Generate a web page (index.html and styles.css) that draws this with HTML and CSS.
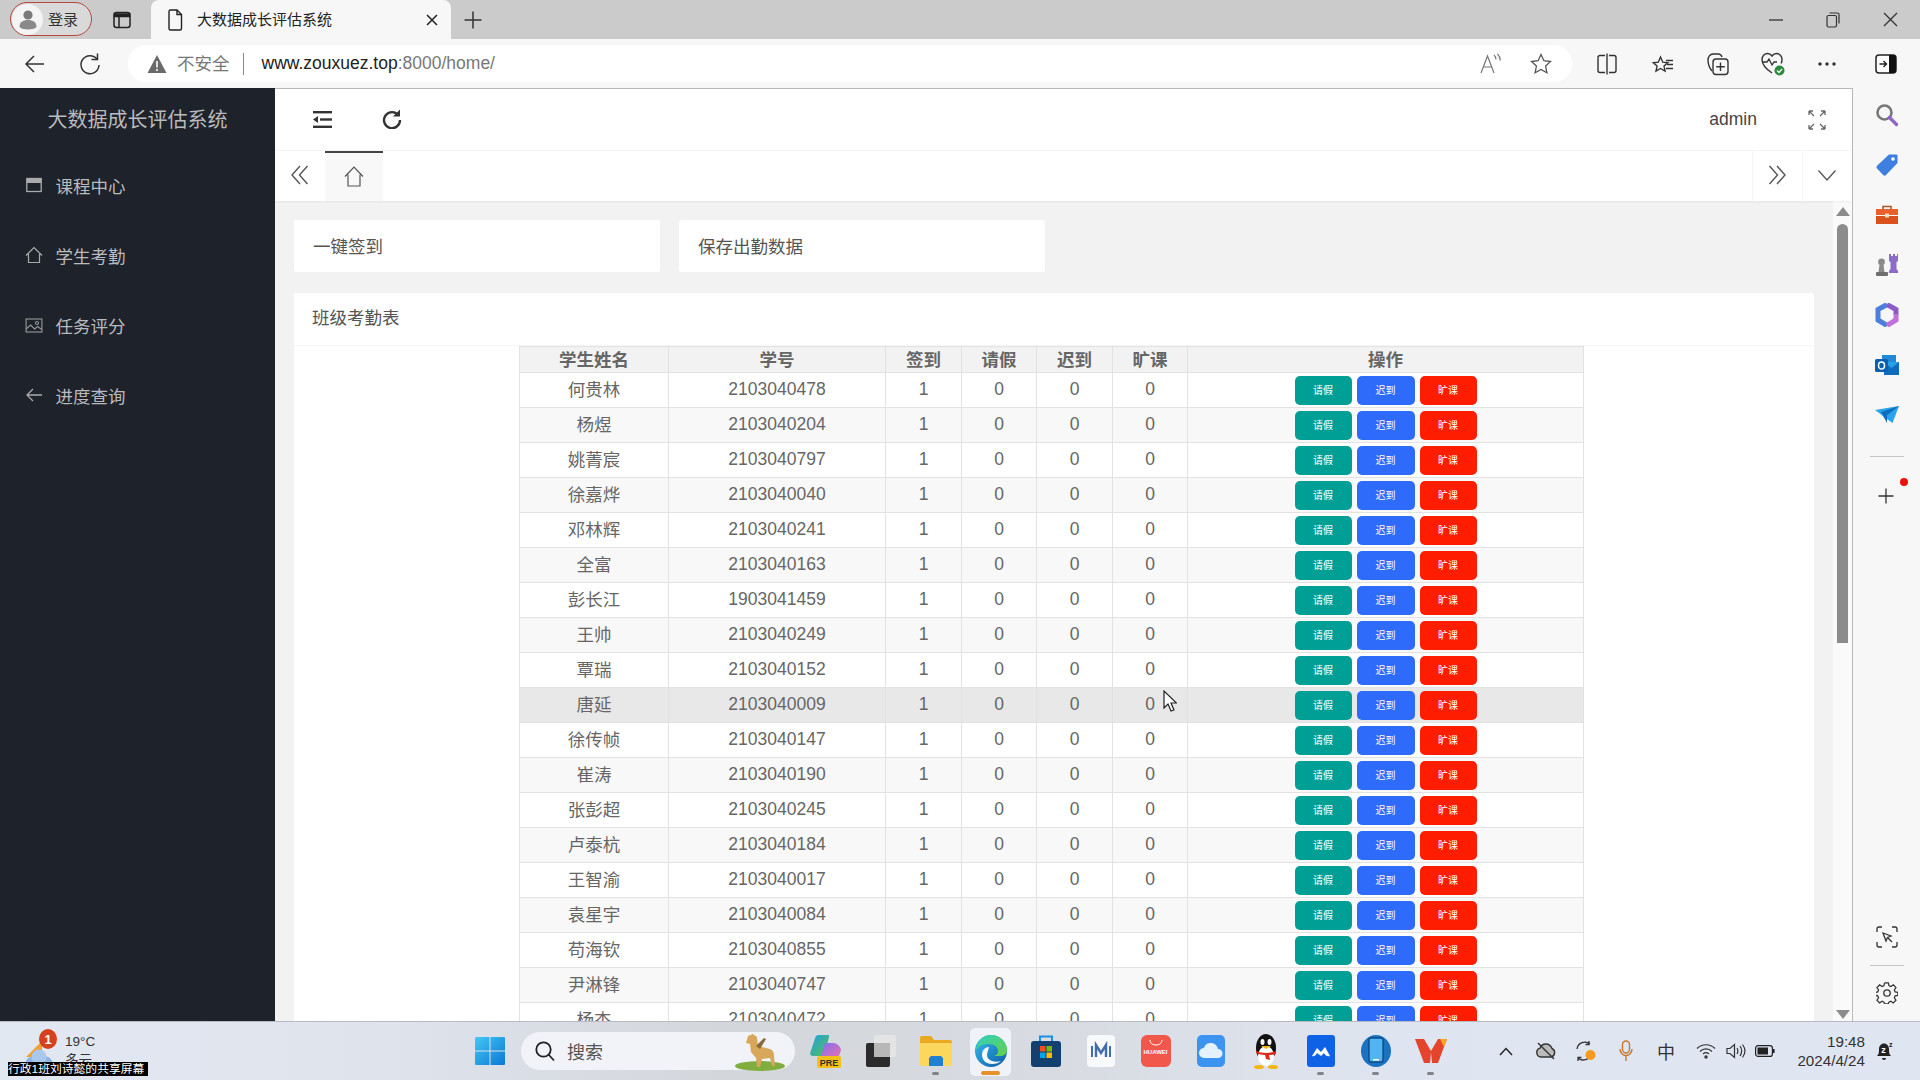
FILE: index.html
```html
<!DOCTYPE html>
<html lang="zh-CN">
<head>
<meta charset="utf-8">
<title>大数据成长评估系统</title>
<link rel="stylesheet" href="styles.css">
</head>
<body>
<div class="window">

  <div class="tabstrip">
    <div class="profile">
      <span class="avatar"><svg width="24" height="24" viewBox="0 0 24 24"><circle cx="12" cy="8" r="4.6" fill="#7a7a7a"/><path d="M3.5 20c0-5 3.5-7 8.5-7s8.500 2 8.500 7c-2 1.800-5 2.500-8.500 2.500S5.500 21.800 3.500 20z" fill="#8a8a8a"/></svg></span>
      <span class="profile-name">登录</span>
    </div>
    <div class="strip-btn"><svg width="20" height="20" viewBox="0 0 20 20" fill="none" stroke="#222" stroke-width="1.500"><rect x="2" y="2.500" width="16" height="15" rx="2.500"/><path d="M2.500 4h15v2.500h-15z" fill="#222"/><path d="M7 6v11"/></svg></div>
    <div class="tab">
      <svg width="16" height="22" viewBox="0 0 16 22" fill="none" stroke="#222" stroke-width="1.400"><path d="M2 2.500a1.500 1.500 0 0 1 1.500-1.500H10l4.500 4.500v14a1.500 1.500 0 0 1-1.500 1.500H3.500A1.500 1.500 0 0 1 2 19.500z"/><path d="M10 1v4.500h4.500"/></svg>
      <span class="tab-title">大数据成长评估系统</span>
      <svg class="tab-close" width="14" height="14" viewBox="0 0 14 14" stroke="#222" stroke-width="1.500"><path d="M2 2l10 10M12 2L2 12"/></svg>
    </div>
    <div class="strip-btn new-tab"><svg width="20" height="20" viewBox="0 0 20 20" stroke="#333" stroke-width="1.500"><path d="M10 1.500v17M1.500 10h17"/></svg></div>
    <div class="win-controls">
      <div class="win-btn"><svg width="14" height="14" viewBox="0 0 14 14" stroke="#333" stroke-width="1.300"><path d="M0 7h14"/></svg></div>
      <div class="win-btn"><svg width="14" height="16" viewBox="0 0 14 16" fill="none" stroke="#333" stroke-width="1.200"><rect x="1" y="3.500" width="9.500" height="11.500" rx="1.500"/><path d="M3.500 1h8a1.500 1.500 0 0 1 1.500 1.500v9"/></svg></div>
      <div class="win-btn"><svg width="15" height="15" viewBox="0 0 15 15" stroke="#333" stroke-width="1.300"><path d="M1 1l13 13M14 1L1 14"/></svg></div>
    </div>
  </div>

  <div class="toolbar">
    <div class="tool-btn"><svg width="22" height="20" viewBox="0 0 22 20" fill="none" stroke="#333" stroke-width="1.500"><path d="M20 10H2M10 2l-8 8 8 8"/></svg></div>
    <div class="tool-btn"><svg width="22" height="24" viewBox="0 0 22 24" fill="none" stroke="#333" stroke-width="1.500"><path d="M18 7a9 9 0 1 0 2 6"/><path d="M18.500 1.500V7.500H12.500"/></svg></div>
    <div class="address">
      <svg class="warn" width="20" height="20" viewBox="0 0 20 20"><path d="M10 1L19.500 19H.5z" fill="#6a6a6a"/><path d="M10 7v6.500M10 15v2" stroke="#fff" stroke-width="1.600"/></svg>
      <span class="insecure">不安全</span>
      <span class="addr-sep"></span>
      <span class="url"><b>www.zouxuez.top</b>:8000/home/</span>
      <div class="addr-btn addr-read"><svg width="24" height="22" viewBox="0 0 24 22" fill="none" stroke="#777" stroke-width="1.200"><path d="M2 20L8.500 3 15 20M4.500 14h8"/><path d="M15 2c1.500 1.500 2 3 2 4.500M18.500 1c2 2 2.800 4 2.800 6.500"/></svg></div>
      <div class="addr-btn"><svg width="22" height="22" viewBox="0 0 22 22" fill="none" stroke="#555" stroke-width="1.300"><path d="M11 1.500l2.900 6.200 6.600.8-4.900 4.600 1.300 6.700L11 16.500l-5.900 3.300 1.300-6.700L1.500 8.500l6.600-.8z"/></svg></div>
    </div>
    <div class="tool-icon split"><svg width="22" height="22" viewBox="0 0 22 22" fill="none" stroke="#333" stroke-width="1.400"><path d="M9 2.500H4a2 2 0 0 0-2 2v13a2 2 0 0 0 2 2h5M13 2.500h5a2 2 0 0 1 2 2v13a2 2 0 0 1-2 2h-5M11 .5v21"/></svg></div>
    <div class="tool-icon nudge-r"><svg width="24" height="24" viewBox="0 0 24 24" fill="none" stroke="#333" stroke-width="1.400"><path d="M9.500 2l2.300 5.200 5 .5-3.800 3.400 1.100 5L9.500 13.500 5 16.100l1.100-5L2.300 7.700l5-.5z" transform="translate(0 3)"/><path d="M15 8.500h7M16 12.500h6M15 16.500h7"/></svg></div>
    <div class="tool-icon"><svg width="24" height="24" viewBox="0 0 24 24" fill="none" stroke="#333" stroke-width="1.400"><path d="M6 19C3.500 16 2 12 2 8c0-3 2-6 5-6h5c2 0 3.500 1 4 3"/><rect x="7" y="7" width="15" height="15.500" rx="3"/><path d="M14.500 10.500v8.500M10.200 14.700h8.600"/></svg></div>
    <div class="tool-icon"><svg width="26" height="26" viewBox="0 0 26 26" fill="none"><path d="M12 22C6 18 2 14 2 8.500 2 5 4.500 2.500 7.500 2.500c2 0 3.500 1 4.500 2.500 1-1.500 2.500-2.500 4.500-2.500 3 0 5.500 2.500 5.500 6 0 1.500-.3 2.700-.8 4" stroke="#333" stroke-width="1.400"/><path d="M3 11h4l2 -3 3 6 2-3h3" stroke="#333" stroke-width="1.300"/><circle cx="19.500" cy="19.500" r="5" fill="#2c8a3c"/><path d="M17 19.500l2 2 3-3.500" stroke="#fff" stroke-width="1.200"/></svg></div>
    <div class="tool-icon nudge-l"><svg width="20" height="6" viewBox="0 0 20 6" fill="#333"><circle cx="3" cy="3" r="1.700"/><circle cx="10" cy="3" r="1.700"/><circle cx="17" cy="3" r="1.700"/></svg></div>
    <div class="tool-toggle"><svg width="22" height="20" viewBox="0 0 22 20"><rect x="1" y="1" width="20" height="18" rx="3" fill="#fff" stroke="#222" stroke-width="1.500"/><path d="M14 1h4a3 3 0 0 1 3 3v12a3 3 0 0 1-3 3h-4z" fill="#111"/><path d="M4.500 10h7M8.500 7l3 3-3 3" fill="none" stroke="#222" stroke-width="1.400"/></svg></div>
  </div>

  <div class="workspace">
    <aside class="sidebar">
      <div class="brand">大数据成长评估系统</div>
      <nav>
        <div class="nav-item"><svg width="16" height="16" viewBox="0 0 16 16" fill="none" stroke="#aaa"><rect x=".8" y="1.500" width="14.400" height="13" stroke-width="1.300"/><path d="M1 2h14v3.500H1z" fill="#aaa"/></svg><span>课程中心</span></div>
        <div class="nav-item"><svg width="18" height="18" viewBox="0 0 18 18" fill="none" stroke="#aaa" stroke-width="1.200"><path d="M1 9.500L9 1.500l8 8M3.500 8v8.500h11V8"/></svg><span>学生考勤</span></div>
        <div class="nav-item"><svg width="17" height="15" viewBox="0 0 17 15" fill="none" stroke="#999" stroke-width="1.100"><rect x=".6" y="1" width="15.800" height="13"/><path d="M.6 11l4.500-4 4 4 3-2.500 4.300 3"/><circle cx="11.500" cy="5" r="1.500"/></svg><span>任务评分</span></div>
        <div class="nav-item"><svg width="17" height="14" viewBox="0 0 17 14" fill="none" stroke="#aaa" stroke-width="1.300"><path d="M16.500 7H1.500M7.500 1L1.500 7l6 6"/></svg><span>进度查询</span></div>
      </nav>
    </aside>

    <main class="main">
      <header class="topbar">
        <div class="top-btn"><svg width="19" height="17" viewBox="0 0 19 17" fill="#333"><rect width="19" height="2.400"/><rect y="14.600" width="19" height="2.400"/><rect x="7" y="7.300" width="12" height="2.400"/><path d="M0 8.500L5 5v7z"/></svg></div>
        <div class="top-btn raise"><svg width="20" height="20" viewBox="0 0 20 20" fill="none" stroke="#333" stroke-width="2.400"><path d="M16.500 6.500A8 8 0 1 0 18 11"/><path d="M18 .5v7h-7z" stroke="none" fill="#333"/></svg></div>
        <div class="admin">admin</div>
        <div class="top-btn full"><svg width="18" height="20" viewBox="0 0 18 20" fill="none" stroke="#666" stroke-width="1.300"><path d="M1 1l5 5M1 1v4M1 1h4M17 1l-5 5M17 1v4M17 1h-4M1 19l5-5M1 19v-4M1 19h4M17 19l-5-5M17 19v-4M17 19h-4"/></svg></div>
      </header>
      <div class="tabsbar">
        <div class="tabs-btn"><svg width="18" height="20" viewBox="0 0 18 20" fill="none" stroke="#555" stroke-width="1.400"><path d="M9 1L1 10l8 9M16.500 1l-8 9 8 9"/></svg></div>
        <div class="home-tab"><svg width="20" height="21" viewBox="0 0 20 21" fill="none" stroke="#555" stroke-width="1.200"><path d="M1 10.500L10 1l9 9.500M4 8.500V20h12V8.500"/></svg></div>
        <div class="tabs-fill"></div>
        <div class="tabs-btn side"><svg width="18" height="20" viewBox="0 0 18 20" fill="none" stroke="#555" stroke-width="1.400"><path d="M1.500 1l8 9-8 9M9 1l8 9-8 9"/></svg></div>
        <div class="tabs-btn side"><svg width="18" height="11" viewBox="0 0 18 11" fill="none" stroke="#555" stroke-width="1.300"><path d="M.5 .5L9 10l8.500-9.500"/></svg></div>
      </div>

      <div class="content">
        <div class="scroller">
          <div class="action-row">
            <div class="card action-card">一键签到</div>
            <div class="card action-card">保存出勤数据</div>
          </div>
          <section class="card table-card">
            <div class="card-title">班级考勤表</div>
            <table class="grid">
              <colgroup><col class="c-name"><col class="c-id"><col class="c-w"><col class="c-n"><col class="c-w"><col class="c-n"><col class="c-ops"></colgroup>
              <thead><tr><th>学生姓名</th><th>学号</th><th>签到</th><th>请假</th><th>迟到</th><th>旷课</th><th>操作</th></tr></thead>
              <tbody>
                <tr><td>何贵林</td><td>2103040478</td><td>1</td><td>0</td><td>0</td><td>0</td><td><div class="ops"><span class="op leave">请假</span><span class="op late">迟到</span><span class="op absent">旷课</span></div></td></tr>
                <tr><td>杨煜</td><td>2103040204</td><td>1</td><td>0</td><td>0</td><td>0</td><td><div class="ops"><span class="op leave">请假</span><span class="op late">迟到</span><span class="op absent">旷课</span></div></td></tr>
                <tr><td>姚菁宸</td><td>2103040797</td><td>1</td><td>0</td><td>0</td><td>0</td><td><div class="ops"><span class="op leave">请假</span><span class="op late">迟到</span><span class="op absent">旷课</span></div></td></tr>
                <tr><td>徐嘉烨</td><td>2103040040</td><td>1</td><td>0</td><td>0</td><td>0</td><td><div class="ops"><span class="op leave">请假</span><span class="op late">迟到</span><span class="op absent">旷课</span></div></td></tr>
                <tr><td>邓林辉</td><td>2103040241</td><td>1</td><td>0</td><td>0</td><td>0</td><td><div class="ops"><span class="op leave">请假</span><span class="op late">迟到</span><span class="op absent">旷课</span></div></td></tr>
                <tr><td>全富</td><td>2103040163</td><td>1</td><td>0</td><td>0</td><td>0</td><td><div class="ops"><span class="op leave">请假</span><span class="op late">迟到</span><span class="op absent">旷课</span></div></td></tr>
                <tr><td>彭长江</td><td>1903041459</td><td>1</td><td>0</td><td>0</td><td>0</td><td><div class="ops"><span class="op leave">请假</span><span class="op late">迟到</span><span class="op absent">旷课</span></div></td></tr>
                <tr><td>王帅</td><td>2103040249</td><td>1</td><td>0</td><td>0</td><td>0</td><td><div class="ops"><span class="op leave">请假</span><span class="op late">迟到</span><span class="op absent">旷课</span></div></td></tr>
                <tr><td>覃瑞</td><td>2103040152</td><td>1</td><td>0</td><td>0</td><td>0</td><td><div class="ops"><span class="op leave">请假</span><span class="op late">迟到</span><span class="op absent">旷课</span></div></td></tr>
                <tr class="hovered"><td>唐延</td><td>2103040009</td><td>1</td><td>0</td><td>0</td><td>0</td><td><div class="ops"><span class="op leave">请假</span><span class="op late">迟到</span><span class="op absent">旷课</span></div></td></tr>
                <tr><td>徐传帧</td><td>2103040147</td><td>1</td><td>0</td><td>0</td><td>0</td><td><div class="ops"><span class="op leave">请假</span><span class="op late">迟到</span><span class="op absent">旷课</span></div></td></tr>
                <tr><td>崔涛</td><td>2103040190</td><td>1</td><td>0</td><td>0</td><td>0</td><td><div class="ops"><span class="op leave">请假</span><span class="op late">迟到</span><span class="op absent">旷课</span></div></td></tr>
                <tr><td>张彭超</td><td>2103040245</td><td>1</td><td>0</td><td>0</td><td>0</td><td><div class="ops"><span class="op leave">请假</span><span class="op late">迟到</span><span class="op absent">旷课</span></div></td></tr>
                <tr><td>卢泰杭</td><td>2103040184</td><td>1</td><td>0</td><td>0</td><td>0</td><td><div class="ops"><span class="op leave">请假</span><span class="op late">迟到</span><span class="op absent">旷课</span></div></td></tr>
                <tr><td>王智渝</td><td>2103040017</td><td>1</td><td>0</td><td>0</td><td>0</td><td><div class="ops"><span class="op leave">请假</span><span class="op late">迟到</span><span class="op absent">旷课</span></div></td></tr>
                <tr><td>袁星宇</td><td>2103040084</td><td>1</td><td>0</td><td>0</td><td>0</td><td><div class="ops"><span class="op leave">请假</span><span class="op late">迟到</span><span class="op absent">旷课</span></div></td></tr>
                <tr><td>苟海钦</td><td>2103040855</td><td>1</td><td>0</td><td>0</td><td>0</td><td><div class="ops"><span class="op leave">请假</span><span class="op late">迟到</span><span class="op absent">旷课</span></div></td></tr>
                <tr><td>尹淋锋</td><td>2103040747</td><td>1</td><td>0</td><td>0</td><td>0</td><td><div class="ops"><span class="op leave">请假</span><span class="op late">迟到</span><span class="op absent">旷课</span></div></td></tr>
                <tr><td>杨杰</td><td>2103040472</td><td>1</td><td>0</td><td>0</td><td>0</td><td><div class="ops"><span class="op leave">请假</span><span class="op late">迟到</span><span class="op absent">旷课</span></div></td></tr>
              </tbody>
            </table>
          </section>
        </div>
        <div class="scrollbar">
          <svg width="14" height="9" viewBox="0 0 14 9" fill="#8c8c8c"><path d="M7 0l7 9H0z"/></svg>
          <div class="thumb"></div>
          <div class="track"></div>
          <svg width="14" height="9" viewBox="0 0 14 9" fill="#8c8c8c"><path d="M7 9L0 0h14z"/></svg>
        </div>
      </div>
    </main>

    <aside class="edgebar">
      <div class="edge-item"><svg width="24" height="24" viewBox="0 0 24 24" fill="none"><circle cx="9.500" cy="9.500" r="7" stroke="#777" stroke-width="2.600"/><path d="M14.500 14.500l7 7" stroke="#8f63c8" stroke-width="3.200" stroke-linecap="round"/></svg></div>
      <div class="edge-item"><svg width="24" height="24" viewBox="0 0 24 24"><path d="M14 1.500h7.500a1 1 0 0 1 1 1V10L11 22a2 2 0 0 1-2.800 0L2 15.500a2 2 0 0 1 0-2.800z" fill="#3f7fe0"/><circle cx="18" cy="6" r="1.800" fill="#fff"/></svg></div>
      <div class="edge-item"><svg width="24" height="22" viewBox="0 0 24 22"><path d="M8 5V2.500h8V5" fill="none" stroke="#a8592a" stroke-width="1.600"/><path d="M1 5h22v6H1z" fill="#e8602a"/><path d="M1 12h22v8H1z" fill="#d9521c"/><rect x="10" y="9.500" width="4" height="4" fill="#fbd9c4"/></svg></div>
      <div class="edge-item"><svg width="24" height="24" viewBox="0 0 24 24"><path d="M14 1h2v2h2V1h2v2h2V1h1v7l-1.500 1v7l1.500 2v2H14v-2l1.500-2V9L14 8z" fill="#8b6cc9"/><circle cx="6.500" cy="9" r="3.400" fill="#8a8a8a"/><path d="M4.500 12h4l1 7h-6z" fill="#8a8a8a"/><rect x="1" y="19" width="12" height="4" rx="1" fill="#6e6e6e"/></svg></div>
      <div class="edge-item"><svg width="24" height="24" viewBox="0 0 24 24" fill="none"><path d="M12 1.500L3 6.500V17l9 5.500" stroke="#4a7fdc" stroke-width="5"/><path d="M12 1.500L21 6.500V12" stroke="#8b5cc8" stroke-width="5"/><path d="M12 22.500L21 17V11" stroke="#c070d8" stroke-width="5"/></svg></div>
      <div class="edge-item"><svg width="24" height="22" viewBox="0 0 24 22"><path d="M7 1h14v10H7z" fill="#1f8ad8"/><path d="M9 8h15v13H9z" fill="#0f6cbd"/><path d="M9 8l7.500 6L24 8" fill="#2aa0e8"/><rect x="0" y="5" width="13" height="13" rx="1.500" fill="#0a5fb0"/><ellipse cx="6.500" cy="11.500" rx="3" ry="3.600" fill="none" stroke="#fff" stroke-width="1.500"/></svg></div>
      <div class="edge-item"><svg width="24" height="18" viewBox="0 0 24 18"><path d="M0 4L24 0 17.500 17z" fill="#29a3ea"/><path d="M6 6l18-6-12 9v8z" fill="#0d6cc0"/></svg></div>
      <div class="edge-sep first"></div>
      <div class="edge-item plus"><svg width="16" height="16" viewBox="0 0 16 16" stroke="#333" stroke-width="1.300"><path d="M8 .5v15M.5 8h15"/></svg><span class="edge-dot"></span></div>
      <div class="edge-fill"></div>
      <div class="edge-item"><svg width="22" height="22" viewBox="0 0 22 22" fill="none" stroke="#333" stroke-width="1.300"><path d="M1 6V3a2 2 0 0 1 2-2h3M16 1h3a2 2 0 0 1 2 2v3M1 16v3a2 2 0 0 0 2 2h3M16 21h3a2 2 0 0 0 2-2v-3"/><path d="M7 7l8 3-3.500 1.500L10 15z"/><path d="M12 12l4 4"/></svg></div>
      <div class="edge-sep last"></div>
      <div class="edge-item"><svg width="22" height="22" viewBox="0 0 22 22" fill="none" stroke="#333" stroke-width="1.300"><path d="M9 1h4l.6 2.800 2 .9L18.200 3l2.800 2.800-1.700 2.600.9 2 2.800.6v3l-2.800.6-.9 2 1.700 2.600-2.800 2.800-2.600-1.700-2 .9L13 23H9" transform="scale(.95)"/><path d="M9 1l-.6 2.800-2 .9L3.800 3 1 5.800l1.700 2.600-.9 2L-1 11v3l2.800.6.9 2L1 19.200 3.800 22l2.600-1.700 2 .9L9 23" transform="scale(.95)"/><circle cx="11" cy="11" r="3.200"/></svg></div>
    </aside>
  </div>

  <footer class="taskbar">
    <div class="weather">
      <svg class="weather-icon" width="32" height="32" viewBox="0 0 32 32"><path d="M2 20L18 4v16z" fill="#f2a22e"/><ellipse cx="15" cy="25" rx="13" ry="7" fill="#8fb4e6"/><circle cx="15" cy="20" r="7.500" fill="#a9c8f0"/></svg>
      <span class="weather-badge">1</span>
      <div class="weather-text"><div>19°C</div><div>多云</div></div>
    </div>
    <div class="start"><svg width="30" height="30" viewBox="0 0 30 30"><defs><linearGradient id="winA" x1="0" y1="0" x2="1" y2="1"><stop offset="0" stop-color="#43c8f5"/><stop offset="1" stop-color="#0a78d4"/></linearGradient></defs><path d="M1 1h13.500v13.500H0V2a1 1 0 0 1 1-1zM15.500 1H29a1 1 0 0 1 1 1v12.500H15.500zM0 15.500h14.500V29H1a1 1 0 0 1-1-1zM15.500 15.500H30V28a1 1 0 0 1-1 1H15.500z" fill="url(#winA)"/></svg></div>
    <div class="search">
      <svg width="22" height="22" viewBox="0 0 22 22" fill="none" stroke="#222" stroke-width="1.800"><circle cx="9.500" cy="9.500" r="7.200"/><path d="M14.500 14.500l5.500 6"/></svg>
      <span>搜索</span>
      <svg class="dog" width="52" height="38" viewBox="0 0 52 38"><ellipse cx="26" cy="33" rx="25" ry="5" fill="#7fae3f"/><path d="M14 3l5-2 4 3 1 9 12 3c3 1 4 4 4 7l1 10h-3l-2-8-8 1-2 8h-3l-1-9-5-6-1-8-4-1z" fill="#d8a75a"/><path d="M22 13l8-8 2 1-6 10z" fill="#8a6a3a"/></svg>
    </div>
    <div class="app"><svg width="32" height="34" viewBox="0 0 32 34"><defs><linearGradient id="cpA" x1="0" x2="1" y1="0" y2="1"><stop offset="0" stop-color="#1fa0e8"/><stop offset="1" stop-color="#58c050"/></linearGradient><linearGradient id="cpB" x1="0" x2="1" y1="0" y2="1"><stop offset="0" stop-color="#7a6ff0"/><stop offset="1" stop-color="#f070b0"/></linearGradient></defs><path d="M8 1h10c1 0 1.500.8 1 2L14 22H3c-2.500 0-3.500-2-2.500-4L5.500 3C6 2 7 1 8 1z" fill="url(#cpA)"/><path d="M15 9h8c4 0 7 3 8 7l-2 6c-1 2-3 3-5 3H10z" fill="url(#cpB)"/><rect x="7" y="22" width="24" height="12" rx="2" fill="#f2c21a"/><text x="19" y="31.500" class="pre">PRE</text></svg></div>
    <div class="app"><svg width="30" height="32" viewBox="0 0 30 32"><rect x="8" y="0" width="22" height="22" rx="2" fill="#e4e4e4"/><rect x="0" y="8" width="24" height="24" rx="2" fill="#2b2b2b"/><path d="M8 8h16v14H8z" fill="#b8b8b8"/></svg></div>
    <div class="app"><svg width="32" height="30" viewBox="0 0 32 30"><path d="M0 2a2 2 0 0 1 2-2h9l3 4h16a2 2 0 0 1 2 2v4H0z" fill="#e8a920"/><path d="M0 7h32v21a2 2 0 0 1-2 2H2a2 2 0 0 1-2-2z" fill="#fbd75b"/><path d="M11 20h10l2 2v8H9v-8z" fill="#1f7fd0"/></svg><span class="app-dot"></span></div>
    <div class="app active"><svg width="32" height="32" viewBox="0 0 32 32"><defs><linearGradient id="edA" x1="0" x2="1" y1="0" y2="1"><stop offset="0" stop-color="#35c1f1"/><stop offset="1" stop-color="#0c59a4"/></linearGradient><linearGradient id="edB" x1="0" x2="1" y1="0" y2="1"><stop offset="0" stop-color="#2fd0c0"/><stop offset="1" stop-color="#66d048"/></linearGradient></defs><circle cx="16" cy="16" r="16" fill="url(#edA)"/><path d="M16 0c9 0 16 7 16 15 0 4-3 6-7 6h-6c3-1 4-3 4-5 0-4-4-7-9-7C8 9 4 11 1 15 2 6 8 0 16 0z" fill="url(#edB)"/><path d="M14 12c-4 0-7 3-7 8 0 5 4 9 10 9 4 0 7-1 9-3-3 1-6 1-9 0-3-1-5-3-5-6 0-2 1-4 2-8z" fill="#fff" opacity=".95"/></svg><span class="app-line"></span></div>
    <div class="app"><svg width="30" height="32" viewBox="0 0 30 32"><path d="M9 7V1.500h12V7" fill="none" stroke="#1e8fe8" stroke-width="2"/><rect y="6" width="30" height="26" rx="3" fill="#14406f"/><rect x="9" y="11" width="5.500" height="5.500" fill="#f25022"/><rect x="15.500" y="11" width="5.500" height="5.500" fill="#7fba00"/><rect x="9" y="17.500" width="5.500" height="5.500" fill="#00a4ef"/><rect x="15.500" y="17.500" width="5.500" height="5.500" fill="#ffb900"/></svg></div>
    <div class="app"><svg width="28" height="32" viewBox="0 0 28 32"><rect width="28" height="32" rx="4" fill="#f8f9fb"/><path d="M5 11v11M23 11v11" stroke="#3f6db0" stroke-width="2"/><path d="M9 22V10l5 8 5-8v12" fill="none" stroke="#3f6db0" stroke-width="2.400"/></svg></div>
    <div class="app"><div class="huawei"><svg width="14" height="6" viewBox="0 0 14 6" fill="none" stroke="#fff"><path d="M1 0c0 3.500 3 5 6 5s6-1.500 6-5"/></svg><span>HUAWEI</span></div></div>
    <div class="app"><svg width="28" height="32" viewBox="0 0 28 32"><rect width="28" height="32" rx="5" fill="#3d94f0"/><path d="M7 23a5 5 0 0 1 0-10c1-4 4-5 7-5 3 0 6 2 7 6a4.500 4.500 0 0 1 0 9z" fill="#e4f1ff"/></svg></div>
    <div class="app"><svg width="26" height="36" viewBox="0 0 26 36"><ellipse cx="13" cy="15" rx="10" ry="14" fill="#111"/><ellipse cx="13" cy="23" rx="8" ry="10" fill="#fff"/><ellipse cx="9.500" cy="9" rx="2" ry="3" fill="#fff"/><ellipse cx="16.500" cy="9" rx="2" ry="3" fill="#fff"/><path d="M8 13h10l-5 3z" fill="#f5b70f"/><path d="M3 18c6 2.500 14 2.500 20 0v3c-3 1-5 1-7 1l1 5-4-1-1-4c-3 0-6-1-9-2z" fill="#e0281c"/><ellipse cx="6" cy="34" rx="5" ry="2" fill="#f5b70f"/><ellipse cx="20" cy="34" rx="5" ry="2" fill="#f5b70f"/></svg></div>
    <div class="app"><svg width="28" height="32" viewBox="0 0 28 32"><rect width="28" height="32" rx="3" fill="#0f62e6"/><path d="M5 21l5-8 4 4 4-5 5 9c-3 1-5-1-6-3l-3 3-4-3c-1 2-3 4-5 3z" fill="#fff"/></svg><span class="app-dot"></span></div>
    <div class="app"><svg width="30" height="32" viewBox="0 0 30 32"><ellipse cx="15" cy="16" rx="15" ry="16" fill="#1a72c0"/><rect x="8" y="3" width="14" height="24" rx="2" fill="#52b5f2" stroke="#0c4c86" stroke-width="1.400"/><rect x="12" y="24" width="6" height="1.500" fill="#fff"/></svg><span class="app-dot"></span></div>
    <div class="app"><svg width="32" height="26" viewBox="0 0 32 26"><path d="M0 1h9l7 12 7-12h9l-9 24h-6l-1-11-1 11H9z" fill="#e5442c"/><path d="M25 1h7l-3 8z" fill="#f7a623"/></svg><span class="app-dot"></span></div>

    <div class="tray-item first"><svg width="14" height="9" viewBox="0 0 14 9" fill="none" stroke="#222" stroke-width="1.500"><path d="M1 8l6-6.500L13 8"/></svg></div>
    <div class="tray-item"><svg width="22" height="20" viewBox="0 0 22 20" fill="none" stroke="#333" stroke-width="1.400"><path d="M6 16a4.500 4.500 0 0 1-1-8.800C6 4 8.500 3 11 3c3 0 5 2 6 4.500a4.500 4.500 0 0 1-1 8.500z" fill="#bbb"/><path d="M3 2l16 16"/></svg></div>
    <div class="tray-item"><svg width="22" height="22" viewBox="0 0 22 22" fill="none" stroke="#333" stroke-width="1.300"><path d="M2 9a8 8 0 0 1 13-5M14 1v3.500h-3.500M16 14a8 8 0 0 1-13 4M3 21v-3.500h3.500"/><circle cx="15.500" cy="15" r="5" fill="#f59a1e" stroke="none"/></svg></div>
    <div class="tray-item"><svg width="14" height="22" viewBox="0 0 14 22" fill="none" stroke="#c77a2c" stroke-width="1.400"><rect x="3.500" y="1" width="7" height="12" rx="3.500"/><path d="M1 9c0 4 3 6.500 6 6.500S13 13 13 9M7 15.500V21"/></svg></div>
    <div class="tray-item"><span class="ime">中</span></div>
    <div class="tray-item"><svg width="20" height="16" viewBox="0 0 20 16" fill="none" stroke="#333" stroke-width="1.200"><path d="M1 5.500c5-5 13-5 18 0M4 8.500c3.500-3.500 8.500-3.500 12 0M7 11c2-1.700 4-1.700 6 0"/><circle cx="10" cy="14" r="1.100" fill="#333"/></svg></div>
    <div class="tray-item vol"><svg width="20" height="16" viewBox="0 0 20 16" fill="none" stroke="#333" stroke-width="1.200"><path d="M1 5.500h3L8.500 1.500v13L4 10.500H1z"/><path d="M11 5c1.200 2 1.200 4 0 6M14 3c2 3 2 7 0 10M16.500 1.500c3 4 3 9 0 13"/></svg></div>
    <div class="tray-item batt"><svg width="20" height="12" viewBox="0 0 20 12" fill="none" stroke="#222" stroke-width="1.200"><rect x=".6" y=".6" width="16.800" height="10.800" rx="2.500"/><rect x="2.500" y="2.500" width="10.500" height="7" fill="#222" stroke="none"/><path d="M18.800 4v4" stroke-width="1.600"/></svg></div>
    <div class="clock"><div>19:48</div><div>2024/4/24</div></div>
    <div class="bell"><svg width="18" height="20" viewBox="0 0 18 20"><path d="M1 15c2-2 2-4 2-7 0-3 2-5.500 5-5.500s5 2.500 5 5.500c0 3 0 5 2 7z" fill="#222"/><path d="M6 17h4a2 2 0 0 1-4 0z" fill="#222"/><text x="5.300" y="11.500" class="bell-z">z</text><text x="13" y="5.500" class="bell-zz">z</text></svg></div>
  </footer>

  <div class="share-caption">行政1班刘诗懿的共享屏幕</div>
  <svg class="cursor" width="14" height="23" viewBox="0 0 14 23"><path d="M1 1v17l4-4 3 7 3-1-3-7h5.500z" fill="#fff" stroke="#222" stroke-width="1.200"/></svg>
</div>
</body>
</html>
```

FILE: styles.css
```css
* { box-sizing: border-box; }
html, body { margin: 0; height: 100%; overflow: hidden; }
body {
  font-family: "Liberation Sans", "Noto Sans CJK SC", sans-serif;
  color: #333;
}
.window {
  position: relative;
  width: 1920px;
  height: 1080px;
  display: flex;
  flex-direction: column;
  overflow: hidden;
}

/* tab strip */
.tabstrip { height: 39px; flex: none; background: #cbcbcb; display: flex; align-items: stretch; }
.profile {
  width: 82px; height: 34px; margin: 2px 0 0 10px;
  border: 1.500px solid #b5483f; border-radius: 17px;
  background: #d9d9d9;
  display: flex; align-items: center; gap: 6px; padding-left: 1px;
}
.avatar { width: 31px; height: 31px; border-radius: 50%; background: #f4f4f4; display: flex; align-items: center; justify-content: center; }
.profile-name { font-size: 15px; color: #333; margin-top: -2px; margin-left: -1px; }
.strip-btn { width: 44px; margin-left: 8px; display: flex; align-items: center; justify-content: center; }
.new-tab { margin-left: 0; }
.tab {
  width: 300px; margin-left: 7px; padding: 0 12px 0 16px;
  background: #f7f7f7; border-radius: 8px 8px 0 0;
  display: flex; align-items: center;
}
.tab-title { margin-left: 14px; font-size: 15px; color: #222; margin-top: -2px; }
.tab-close { margin-left: auto; }
.win-controls { margin-left: auto; display: flex; padding-right: 1px; }
.win-btn { width: 57px; display: flex; align-items: center; justify-content: center; }
.win-btn svg { margin-left: -1px; }

/* toolbar */
.toolbar { height: 49px; flex: none; background: #f7f7f7; display: flex; align-items: center; }
.tool-btn { width: 55px; height: 49px; margin-left: 7px; margin-right: -7px; display: flex; align-items: center; justify-content: center; }
.address {
  width: 1444px; height: 37px; margin: 0 0 0 18px; padding: 0 6px 0 19px;
  background: #fff; border-radius: 18px;
  display: flex; align-items: center;
}
.warn { flex: none; }
.insecure { margin-left: 10px; font-size: 17.500px; color: #777; margin-top: -2px; }
.addr-sep { width: 1px; height: 22px; background: #888; margin: 0 17px 0 13px; }
.url { font-size: 17.500px; color: #777; margin-left: 1px; }
.url b { font-weight: normal; color: #222; }
.addr-btn { width: 50px; display: flex; align-items: center; justify-content: center; }
.addr-read { margin-left: auto; }
.tool-icon { width: 55px; height: 49px; flex: none; display: flex; align-items: center; justify-content: center; }
.tool-icon.split { margin-left: 7px; }
.tool-icon.nudge-r { margin-left: 1px; }
.tool-icon.nudge-l { margin-left: -1px; }
.tool-toggle { width: 64px; display: flex; justify-content: center; }

/* workspace */
.workspace { flex: 1; min-height: 0; display: flex; }
.sidebar { width: 275px; flex: none; background: #1e222b; color: #b9babd; }
.brand { height: 62px; padding-bottom: 2px; display: flex; align-items: center; justify-content: center; font-size: 20px; }
.nav-item { height: 70px; padding: 0 0 0 25px; display: flex; align-items: center; font-size: 17.500px; }
.nav-item svg { width: 18px; flex: none; }
.nav-item span { margin-left: 12.500px; }

.main {
  flex: 1; min-width: 0; display: flex; flex-direction: column;
  border-top: 1px solid #b9b9b9; border-right: 1px solid #b9b9b9;
  background: #fff;
}
.topbar { height: 62px; flex: none; padding: 0 10px 0 12px; display: flex; align-items: center; border-bottom: 1px solid #f6f6f6; }
.top-btn { width: 70px; display: flex; justify-content: center; }
.top-btn.raise { padding-bottom: 2px; }
.admin { margin-left: auto; margin-right: 35px; font-size: 17.500px; color: #444; }
.full { width: 50px; }
.tabsbar { height: 50px; flex: none; display: flex; background: #fff; box-shadow: 0 1px 2px rgba(0,0,0,.06); position: relative; z-index: 1; }
.tabs-btn { width: 50px; padding-bottom: 2px; display: flex; align-items: center; justify-content: center; }
.home-tab { width: 58px; padding-bottom: 2px; background: #f8f8f8; border-top: 2px solid #444; display: flex; align-items: center; justify-content: center; }
.tabs-fill { flex: 1; }
.side { border-left: 1px solid #f6f6f6; }
.side svg { margin-left: -1px; }

.content { flex: 1; min-height: 0; background: #f2f2f2; display: flex; }
.scroller { flex: 1; min-width: 0; overflow: hidden; padding: 19px 19px 0 19px; }
.action-row { display: flex; gap: 19px; }
.card { background: #fff; border-radius: 2px; }
.action-card { width: 366px; height: 52px; padding: 0 0 2px 19px; display: flex; align-items: center; font-size: 17.500px; color: #555; }
.table-card { margin-top: 21px; padding: 0 0 40px 225px; }
.card-title { height: 53px; margin-left: -225px; padding: 0 0 5px 18px; display: flex; align-items: center; font-size: 17.500px; color: #555; border-bottom: 1px solid #f6f6f6; }

.grid { width: 1064px; table-layout: fixed; border-collapse: collapse; font-size: 17.500px; color: #666; text-align: center; }
.c-name { width: 149px; }
.c-id { width: 217px; }
.c-w { width: 76px; }
.c-n { width: 75px; }
.c-ops { width: 396px; }
.grid th, .grid td { border: 1px solid #e2e2e2; padding: 0; }
.grid th { height: 26px; padding-top: 1px; background: #f2f2f2; font-weight: bold; color: #666; line-height: 20px; }
.grid td { height: 35px; line-height: 20px; }
.grid td:nth-child(n+2):nth-child(-n+6) { padding-bottom: 2px; }
.grid tbody tr:nth-child(even) { background: #f8f8f8; }
.grid tbody tr.hovered { background: #e8e8e8; }
.ops { display: flex; justify-content: center; gap: 5px; }
.op { width: 57px; height: 29px; border-radius: 5px; color: #fff; font-size: 10px; line-height: 30px; }
.late { width: 58px; }
.leave { background: #009f95; }
.late { background: #2e6bfa; }
.absent { background: #ff1d00; }

.scrollbar { width: 19px; flex: none; background: #fafafa; display: flex; flex-direction: column; align-items: center; padding: 6px 0 2px; }
.thumb { width: 11px; height: 419px; margin-top: 8px; border-radius: 6px 6px 0 0; background: #8c8c8c; }
.track { flex: 1; }

/* edge bar */
.edgebar { width: 67px; flex: none; background: #f7f7f7; display: flex; flex-direction: column; align-items: center; padding: 2px 0 3px; }
.edge-item { position: relative; width: 100%; height: 50px; flex: none; display: flex; align-items: center; justify-content: center; }
.edge-sep { width: 34px; height: 1px; background: #c4c4c4; flex: none; }
.edge-sep.first { margin: 16px 0 14px; }
.edge-sep.last { margin: 3px 0 2px; }
.edge-fill { flex: 1; }
.edge-dot { position: absolute; top: 7px; right: 12px; width: 8px; height: 8px; border-radius: 50%; background: #e8140c; }
.plus svg { margin-left: -2px; }

/* taskbar */
.taskbar {
  height: 59px; flex: none; display: flex; align-items: center;
  border-top: 1px solid #b8bcc2;
  background: linear-gradient(90deg, #e2e8f2 0, #dfe3ec 20%, #d3d6db 38%, #d8dbe1 55%, #dfe5f0 72%, #dfe6f2 100%);
}
.weather { width: 467px; flex: none; position: relative; display: flex; align-items: center; padding-left: 24px; height: 100%; }
.weather-icon { flex: none; margin-top: 4px; }
.weather-badge {
  position: absolute; left: 39px; top: 7px; width: 18px; height: 20px; border-radius: 50%;
  background: #d6401a; color: #fff; font-size: 13px; font-weight: bold;
  display: flex; align-items: center; justify-content: center;
}
.weather-text { margin-left: 9px; font-size: 13.500px; line-height: 19px; color: #333; }
.start { width: 45px; flex: none; display: flex; justify-content: center; }
.search {
  width: 274px; height: 38px; flex: none; margin: 0 3px 0 9px; padding-left: 13px;
  background: #f1f3f8; border-radius: 19px;
  display: flex; align-items: center; font-size: 18px; color: #555;
}
.search span { margin-left: 11px; }
.dog { margin-left: auto; margin-right: 9px; margin-top: 2px; }
.app { position: relative; width: 55px; height: 59px; flex: none; display: flex; align-items: center; justify-content: center; }
.app.active::before { content: ""; position: absolute; left: 7px; right: 7px; top: 6px; bottom: 5px; background: #f0f2f7; border-radius: 5px; }
.app.active svg { position: relative; }
.app-dot { position: absolute; left: 24px; top: 50px; width: 7px; height: 3px; border-radius: 2px; background: #808488; }
.app-line { position: absolute; left: 18px; top: 49px; width: 19px; height: 4px; border-radius: 2px; background: #e8912a; }
.pre { font-size: 9px; font-weight: bold; fill: #333; text-anchor: middle; }
.huawei { width: 30px; height: 32px; border-radius: 6px; background: #f2574c; color: #fff; display: flex; flex-direction: column; align-items: center; gap: 3px; padding-top: 5px; font-size: 6px; font-weight: bold; }
.tray-item { width: 40px; height: 59px; flex: none; display: flex; align-items: center; justify-content: center; }
.tray-item.first { margin-left: 28px; }
.tray-item.vol { width: 20px; }
.tray-item.batt { width: 38px; }
.ime { font-size: 18px; color: #333; }
.clock { width: 81px; flex: none; padding-bottom: 1px; text-align: right; font-size: 15.200px; line-height: 19px; color: #333; }
.bell { width: 40px; flex: none; display: flex; justify-content: center; }
.bell-z { font-size: 9px; font-weight: bold; fill: #fff; }
.bell-zz { font-size: 7px; font-weight: bold; fill: #222; }

/* overlays */
.share-caption {
  position: absolute; left: 8px; top: 1062px; width: 140px; height: 14px;
  background: #000; color: #fff; font-size: 11.800px; line-height: 14px; white-space: nowrap; overflow: hidden;
}
.cursor { position: absolute; left: 1163px; top: 690px; }
```
